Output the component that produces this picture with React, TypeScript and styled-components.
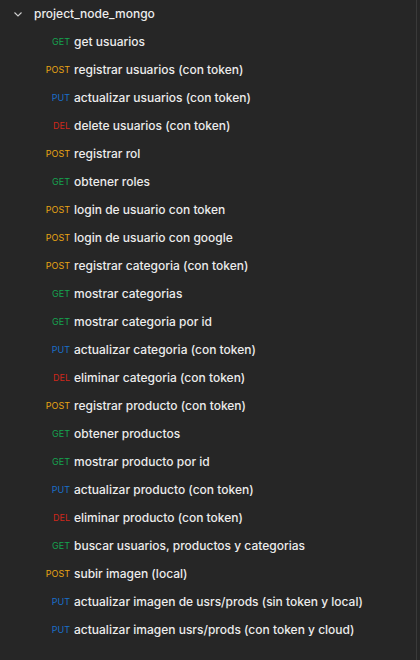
import React from "react";
import styled, { createGlobalStyle } from "styled-components";

const Global = createGlobalStyle`
  html, body { margin: 0; padding: 0; background: #262626; }
  body { font-family: Inter, "Noto Sans", sans-serif; }
`;

const Panel = styled.div`
  width: 420px;
  height: 660px;
  background: #262626;
  display: flex;
  box-sizing: border-box;
`;

const Tree = styled.div`
  flex: 1;
  display: flex;
  flex-direction: column;
`;

const Scrollbar = styled.div`
  width: 1px;
  background: #3a3a3a;
  margin-right: 3px;
`;

const Header = styled.div`
  height: 27px;
  display: flex;
  align-items: center;
  padding-left: 12px;
  gap: 10px;
  color: #ececec;
  font-size: 12px;
  font-weight: 500;
`;

const Row = styled.div`
  height: 28px;
  display: flex;
  align-items: center;
`;

const colors: Record<string, string> = {
  GET: "#15a34f",
  POST: "#e8a414",
  PUT: "#1a6fca",
  DEL: "#d0281b",
};

const Method = styled.span<{ $m: string }>`
  width: 74px;
  text-align: right;
  font-size: 9px;
  color: ${(p) => colors[p.$m]};
  padding-right: 4px;
  box-sizing: border-box;
`;

const Label = styled.span`
  color: #ececec;
  font-size: 12px;
  font-weight: 500;
  white-space: nowrap;
`;

const items: [string, string][] = [
  ["GET", "get usuarios"],
  ["POST", "registrar usuarios (con token)"],
  ["PUT", "actualizar usuarios (con token)"],
  ["DEL", "delete usuarios (con token)"],
  ["POST", "registrar rol"],
  ["GET", "obtener roles"],
  ["POST", "login de usuario con token"],
  ["POST", "login de usuario con google"],
  ["POST", "registrar categoria (con token)"],
  ["GET", "mostrar categorias"],
  ["GET", "mostrar categoria por id"],
  ["PUT", "actualizar categoria (con token)"],
  ["DEL", "eliminar categoria (con token)"],
  ["POST", "registrar producto (con token)"],
  ["GET", "obtener productos"],
  ["GET", "mostrar producto por id"],
  ["PUT", "actualizar producto (con token)"],
  ["DEL", "eliminar producto (con token)"],
  ["GET", "buscar usuarios, productos y categorias"],
  ["POST", "subir imagen (local)"],
  ["PUT", "actualizar imagen de usrs/prods (sin token y local)"],
  ["PUT", "actualizar imagen usrs/prods (con token y cloud)"],
];

export default function App() {
  return (
    <>
      <Global />
      <Panel>
        <Tree>
          <Header>
            <svg width="12" height="12" viewBox="0 0 12 12">
              <path d="M2.5 4.5 L6 8 L9.5 4.5" fill="none" stroke="#cfcfcf" strokeWidth="1.1" />
            </svg>
            <span>project_node_mongo</span>
          </Header>
          {items.map(([m, t], i) => (
            <Row key={i}>
              <Method $m={m}>{m}</Method>
              <Label>{t}</Label>
            </Row>
          ))}
        </Tree>
        <Scrollbar />
      </Panel>
    </>
  );
}
